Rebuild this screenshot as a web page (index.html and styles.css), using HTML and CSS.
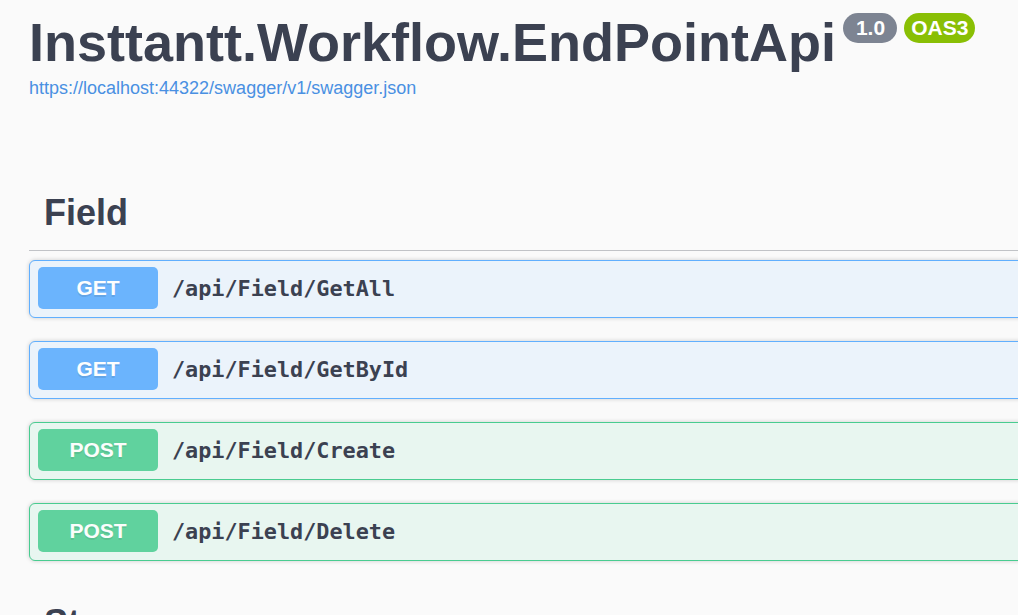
FILE: index.html
```html
<!DOCTYPE html>
<html lang="en">
<head>
<meta charset="utf-8">
<title>Insttantt.Workflow.EndPointApi</title>
<link rel="stylesheet" href="styles.css">
</head>
<body>
<div class="wrapper">
  <div class="info">
    <div class="title-row">
      <h2 class="title">Insttantt.Workflow.EndPointApi</h2>
      <div class="stamps">
        <span class="stamp stamp-version">1.0</span>
        <span class="stamp stamp-oas">OAS3</span>
      </div>
    </div>
    <a class="base-url" href="#">https://localhost:44322/swagger/v1/swagger.json</a>
  </div>

  <section class="tag-section">
    <h3 class="tag-title">Field</h3>
    <div class="opblock opblock-get">
      <span class="method">GET</span>
      <span class="path">/api/Field/GetAll</span>
    </div>
    <div class="opblock opblock-get">
      <span class="method">GET</span>
      <span class="path">/api/Field/GetById</span>
    </div>
    <div class="opblock opblock-post">
      <span class="method">POST</span>
      <span class="path">/api/Field/Create</span>
    </div>
    <div class="opblock opblock-post">
      <span class="method">POST</span>
      <span class="path">/api/Field/Delete</span>
    </div>
  </section>

  <section class="tag-section tag-section-next">
    <h3 class="tag-title">Step</h3>
  </section>
</div>
</body>
</html>
```
FILE: styles.css
```css
html, body {
  margin: 0;
  padding: 0;
  overflow: hidden;
  background: #fafafa;
}

body {
  font-family: "Liberation Sans", Arial, sans-serif;
  color: #3b4151;
}

.wrapper {
  width: 1200px;
  padding: 0 0 0 29px;
  box-sizing: border-box;
}

.info {
  padding-top: 13px;
}

.title-row {
  display: flex;
  align-items: flex-start;
  gap: 7px;
}

.title {
  margin: 2px 0 0;
  font-size: 54px;
  line-height: 54px;
  font-weight: 700;
  color: #3b4151;
  white-space: nowrap;
}

.stamps {
  display: flex;
  gap: 7px;
}

.stamp {
  display: block;
  height: 30px;
  line-height: 30px;
  border-radius: 57px;
  font-size: 21px;
  font-weight: 700;
  color: #fff;
}

.stamp-version {
  background: #7d8492;
  padding: 0 12px 0 13px;
}

.stamp-oas {
  background: #89bf04;
  padding: 0 7px;
}

.base-url {
  display: block;
  margin-top: 9px;
  font-size: 18px;
  line-height: 21px;
  color: #4990e2;
  text-decoration: none;
}

.tag-section {
  margin-top: 90px;
}

.tag-section-next {
  margin-top: 38px;
}

.tag-title {
  margin: 0;
  padding: 0 0 13px 15px;
  font-size: 36px;
  line-height: 48px;
  font-weight: 700;
  color: #3b4151;
  border-bottom: 1px solid #c1c3c7;
}

.tag-section-next .tag-title {
  border-bottom: none;
}

.opblock {
  display: flex;
  align-items: center;
  margin-top: 9px;
  margin-bottom: 23px;
  padding: 6px 8px 8px 8px;
  border: 1px solid;
  border-radius: 6px;
  box-shadow: 0 0 4px rgba(0, 0, 0, 0.19);
}

.opblock + .opblock {
  margin-top: 0;
}

.opblock-get {
  background: #ebf3fb;
  border-color: #61affe;
}

.opblock-post {
  background: #e8f6f0;
  border-color: #49cc90;
}

.method {
  display: flex;
  align-items: center;
  justify-content: center;
  width: 120px;
  height: 42px;
  border-radius: 5px;
  font-size: 21px;
  font-weight: 700;
  color: #fff;
  text-shadow: 0 1.5px 0 rgba(0, 0, 0, 0.1);
}

.opblock-get .method {
  background: #61affe;
  opacity: 0.92;
}

.opblock-post .method {
  background: #49cc90;
  opacity: 0.85;
}

.path {
  padding-left: 14px;
  font-family: "DejaVu Sans Mono", "Liberation Mono", monospace;
  font-size: 21.8px;
  font-weight: 700;
  color: #3b4151;
}
```
